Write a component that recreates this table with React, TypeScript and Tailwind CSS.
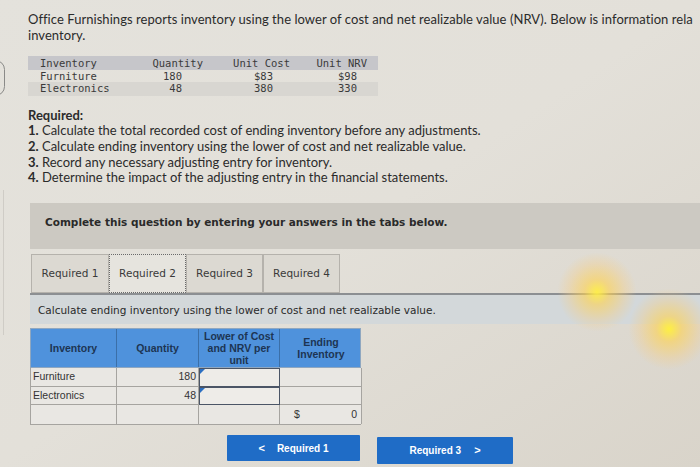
import React from "react";

const sans = { fontFamily: "Lato, 'Open Sans', sans-serif" };
const verdana = { fontFamily: "'DejaVu Sans', Verdana, sans-serif" };
const arial = { fontFamily: "'Liberation Sans', Arial, sans-serif" };
const mono = { fontFamily: "'DejaVu Sans Mono', monospace" };

function InputCell() {
  return (
    <div className="relative h-full border-[1.5px] border-[#4b5566] bg-[#eeece8]">
      <div className="absolute left-0 top-0 w-0 h-0 border-t-[5px] border-r-[5px] border-t-[#2b6fc2] border-r-transparent" />
    </div>
  );
}

export default function App() {
  return (
    <div className="relative w-[700px] h-[467px] overflow-hidden bg-gradient-to-br from-[#e4e2dc] via-[#e3e0d9] to-[#d9d4ca] text-[#2a2a2a]">
      {/* left edge arc */}
      <div className="absolute left-[-14px] top-[60px] w-[19px] h-[36px] rounded-full border border-[#8a8a88]" />
      <div className="absolute left-[3px] top-[190px] w-px h-[145px] bg-[#cfccc6]" />

      <div className="pl-[28px] pt-[11px] text-[13px] leading-[16px] text-[#2b2b2b] tracking-[0.05px]" style={sans}>
        <div className="whitespace-nowrap">
          Office Furnishings reports inventory using the lower of cost and net realizable value (NRV). Below is information rela
        </div>
        <div>inventory.</div>
      </div>

      {/* data table */}
      <div className="ml-[28px] mt-[13px] w-[350px] text-[10.5px] leading-[12.5px] text-[#3a3a3a]" style={mono}>
        <div className="flex bg-[#c6c6ca] pt-[1px]">
          <div className="w-[122px] pl-[12px]">Inventory</div>
          <div className="w-[60px] text-right pr-[7px]">Quantity</div>
          <div className="w-[85px] text-right pr-[5px]">Unit Cost</div>
          <div className="w-[83px] text-right pr-[11px]">Unit NRV</div>
        </div>
        <div className="flex">
          <div className="w-[122px] pl-[12px]">Furniture</div>
          <div className="w-[60px] text-right pr-[28px]">180</div>
          <div className="w-[85px] text-right pr-[22px]">$83</div>
          <div className="w-[83px] text-right pr-[21px]">$98</div>
        </div>
        <div className="flex bg-[#d8d6d1] pb-[1px]">
          <div className="w-[122px] pl-[12px]">Electronics</div>
          <div className="w-[60px] text-right pr-[28px]">48</div>
          <div className="w-[85px] text-right pr-[22px]">380</div>
          <div className="w-[83px] text-right pr-[21px]">330</div>
        </div>
      </div>

      {/* required */}
      <div className="pl-[28px] mt-[12px] text-[13px] leading-[15.7px] text-[#2b2b2b]" style={sans}>
        <div className="font-bold">Required:</div>
        <div><span className="font-bold">1.</span> Calculate the total recorded cost of ending inventory before any adjustments.</div>
        <div><span className="font-bold">2.</span> Calculate ending inventory using the lower of cost and net realizable value.</div>
        <div><span className="font-bold">3.</span> Record any necessary adjusting entry for inventory.</div>
        <div><span className="font-bold">4.</span> Determine the impact of the adjusting entry in the financial statements.</div>
      </div>

      {/* instruction box */}
      <div className="ml-[30px] mt-[17px] h-[46px] bg-[#ccc9c2] pl-[15px] pt-[12px]" style={verdana}>
        <div className="text-[10.5px] font-bold text-[#2a2a2a]">Complete this question by entering your answers in the tabs below.</div>
      </div>

      {/* tabs */}
      <div className="ml-[31px] mt-[5px] flex h-[39px] text-[10.5px] text-[#3a3a3a]" style={verdana}>
        <div className="w-[78px] border border-[#b5b2ac] bg-[#dcd9d2] flex items-center justify-center">Required 1</div>
        <div className="w-[77px] border border-dotted border-[#6a6a6a] bg-[#e6e4de] flex items-center justify-center">Required 2</div>
        <div className="w-[77px] border border-[#b5b2ac] bg-[#dcd9d2] flex items-center justify-center">Required 3</div>
        <div className="w-[77px] border border-[#b5b2ac] bg-[#dcd9d2] flex items-center justify-center">Required 4</div>
      </div>

      {/* calculate band */}
      <div className="ml-[30px] border-t-2 border-[#8c8f92] h-[31px] bg-[#d3d8da] pl-[8px] pt-[8px]" style={verdana}>
        <div className="text-[10.5px] text-[#2a2a2a]">Calculate ending inventory using the lower of cost and net realizable value.</div>
      </div>

      {/* answer table */}
      <div className="ml-[30px] mt-[4px] w-[331px] text-[10.5px]" style={arial}>
        <div className="grid grid-cols-[86px_82px_81px_82px] h-[40px] bg-[#4f92dc] font-bold text-[#1d3553] leading-[12px] border border-[#8fa7c0]">
          <div className="flex items-center justify-center border-r border-[#3b6fa8]">Inventory</div>
          <div className="flex items-center justify-center border-r border-[#3b6fa8]">Quantity</div>
          <div className="flex items-center justify-center text-center border-r border-[#3b6fa8]">Lower of Cost<br />and NRV per<br />unit</div>
          <div className="flex items-center justify-center text-center">Ending<br />Inventory</div>
        </div>
        <div className="grid grid-cols-[86px_82px_81px_82px] text-[#333] border-l border-b border-[#a6a4a0]">
          <div className="h-[19px] pl-[2px] flex items-center border-r border-b border-[#a6a4a0] bg-[#e9e7e3]">Furniture</div>
          <div className="h-[19px] pr-[2px] flex items-center justify-end border-r border-b border-[#a6a4a0] bg-[#e9e7e3]">180</div>
          <div className="h-[19px]"><InputCell /></div>
          <div className="h-[19px] border-r border-b border-[#a6a4a0] bg-[#e9e7e3]" />
          <div className="h-[18px] pl-[2px] flex items-center border-r border-b border-[#a6a4a0] bg-[#e9e7e3]">Electronics</div>
          <div className="h-[18px] pr-[2px] flex items-center justify-end border-r border-b border-[#a6a4a0] bg-[#e9e7e3]">48</div>
          <div className="h-[18px]"><InputCell /></div>
          <div className="h-[18px] border-r border-b border-[#a6a4a0] bg-[#e9e7e3]" />
          <div className="h-[19px] border-r border-[#a6a4a0] bg-[#e9e7e3]" />
          <div className="h-[19px] border-r border-[#a6a4a0] bg-[#e9e7e3]" />
          <div className="h-[19px] border-r border-[#a6a4a0] bg-[#e9e7e3]" />
          <div className="h-[19px] flex items-center justify-between pl-[14px] pr-[4px] border-r border-[#a6a4a0] bg-[#e9e7e3]">
            <span>$</span>
            <span>0</span>
          </div>
        </div>
      </div>

      {/* buttons */}
      <div className="ml-[227px] mt-[10px] flex items-start gap-[17px] text-[10px] font-bold text-white" style={arial}>
        <div className="w-[133px] h-[26px] bg-[#1f6cc6] flex items-center justify-center gap-[12px] rounded-[1px]">
          <span className="text-[11px]">&lt;</span>
          <span>Required 1</span>
        </div>
        <div className="mt-[2px] w-[136px] h-[27px] bg-[#1f6cc6] flex items-center justify-center gap-[13px] rounded-[1px]">
          <span>Required 3</span>
          <span className="text-[11px]">&gt;</span>
        </div>
      </div>

      {/* light glare */}
      <div className="pointer-events-none absolute left-[557px] top-[252px] w-[80px] h-[80px] rounded-full bg-[radial-gradient(circle,_rgba(255,238,70,0.95)_0%,_rgba(255,210,80,0.6)_22%,_rgba(250,205,120,0.3)_50%,_rgba(250,205,120,0)_70%)]" />
      <div className="pointer-events-none absolute left-[628px] top-[288px] w-[82px] h-[82px] rounded-full bg-[radial-gradient(circle,_rgba(255,240,60,0.95)_0%,_rgba(255,210,80,0.6)_22%,_rgba(250,205,120,0.3)_50%,_rgba(250,205,120,0)_70%)]" />
    </div>
  );
}
